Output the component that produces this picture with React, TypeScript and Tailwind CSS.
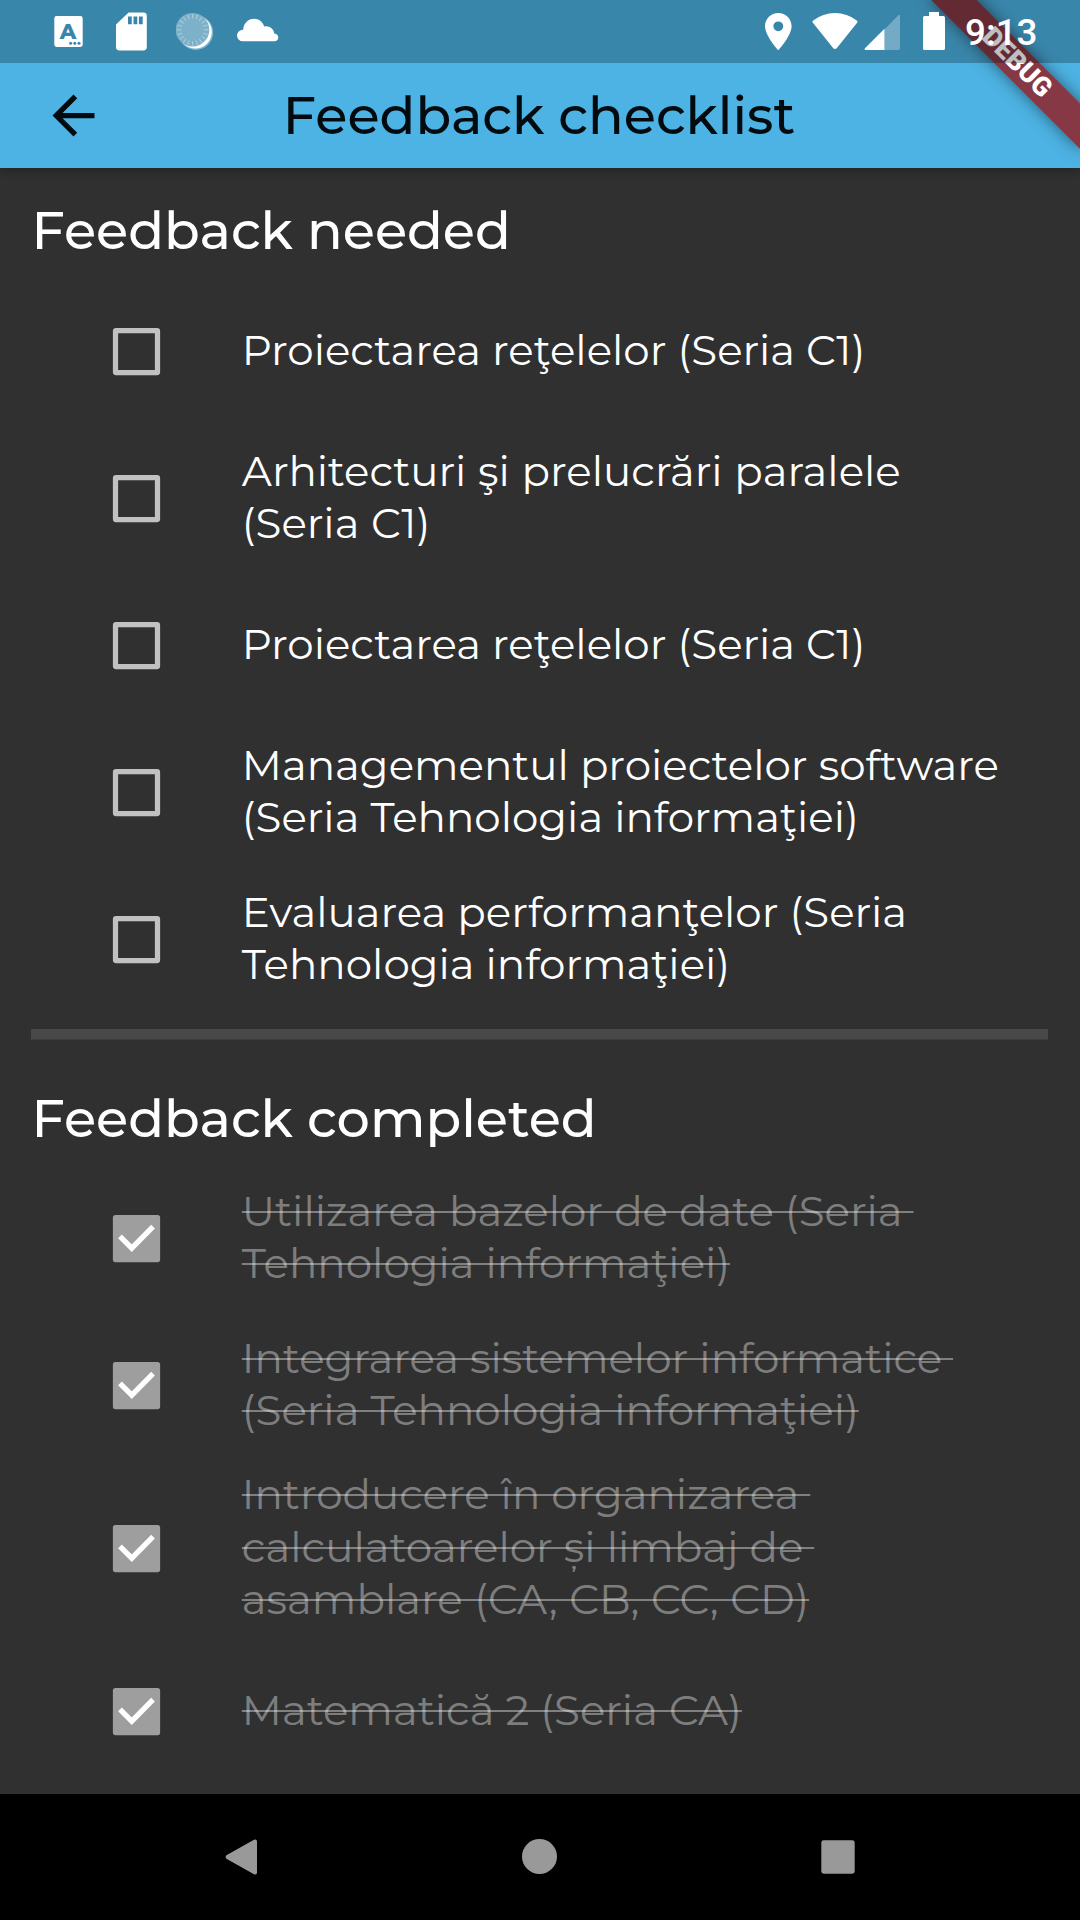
import React from "react";

type Item = { lines: string[]; done?: boolean; spacing?: string };

const needed: Item[] = [
  { lines: ["Proiectarea reţelelor (Seria C1)"] },
  { lines: ["Arhitecturi şi prelucrări paralele", "(Seria C1)"], spacing: "[word-spacing:0.7px]" },
  { lines: ["Proiectarea reţelelor (Seria C1)"] },
  { lines: ["Managementul proiectelor software", "(Seria Tehnologia informaţiei)"] },
  { lines: ["Evaluarea performanţelor (Seria", "Tehnologia informaţiei)"] },
];

const completed: Item[] = [
  { lines: ["Utilizarea bazelor de date (Seria ", "Tehnologia informaţiei)"], done: true },
  { lines: ["Integrarea sistemelor informatice ", "(Seria Tehnologia informaţiei)"], done: true },
  {
    lines: ["Introducere în organizarea ", "calculatoarelor și limbaj de ", "asamblare (CA, CB, CC, CD)"],
    done: true,
    spacing: "last:[word-spacing:0.6px]",
  },
  { lines: ["Matematică 2 (Seria CA)"], done: true },
];

const spokes = Array.from({ length: 20 }, (_, i) => i * 18);

function Checkbox({ checked }: { checked?: boolean }) {
  return (
    <svg className="size-[63px] shrink-0" viewBox="0 0 24 24" role="checkbox" aria-checked={!!checked}>
      {checked ? (
        <>
          <rect x="3" y="3" width="18" height="18" rx="1" fill="#9e9e9e" />
          <path d="M5.7 11.2 L10.2 15.7 L18.3 7.5" fill="none" stroke="#fff" strokeWidth="2" />
        </>
      ) : (
        <rect x="4" y="4" width="16" height="16" rx="0.2" fill="none" stroke="#c1c1c1" strokeWidth="2" strokeLinejoin="round" />
      )}
    </svg>
  );
}

function Row({ item }: { item: Item }) {
  const tall = item.lines.length > 2;
  return (
    <div className={`flex items-center pl-[73.5px] ${tall ? "h-[178.5px]" : "h-[147px]"}`}>
      <Checkbox checked={item.done} />
      <div className={`ml-[73.8px] ${tall ? "pb-[3px] leading-[52.5px]" : "pb-[3px] leading-[52px]"} ${item.done ? "text-white/39" : "text-white"}`}>
        {item.lines.map((line) => (
          <div key={line} className={`text-[42px] leading-[inherit] whitespace-pre ${item.spacing ?? ""}`}>
            <span className={item.done ? "line-through decoration-[2.2px]" : ""}>{line}</span>
          </div>
        ))}
      </div>
    </div>
  );
}

function StatusBar() {
  return (
    <div className="relative z-20 flex h-[63px] items-start bg-black/25 pl-[54px]">
      <svg className="mt-4 h-[31px] w-[29px]" viewBox="0 0 29 31">
        <rect x="0.3" y="0" width="28.4" height="31" rx="2.4" fill="#fff" />
        <text x="14.1" y="22.6" textAnchor="middle" fontFamily="Montserrat, Inter, sans-serif" fontWeight="800" fontSize="21" fill="#3a86ab">
          A
        </text>
        <circle cx="16.6" cy="27.2" r="1.5" fill="#3a86ab" />
        <circle cx="20.8" cy="27.2" r="1.5" fill="#3a86ab" />
        <circle cx="25" cy="27.2" r="1.5" fill="#3a86ab" />
      </svg>
      <svg className="mt-3 ml-[33px] h-[39px] w-[31px]" viewBox="0 0 31 39">
        <path
          fillRule="evenodd"
          fill="#fff"
          d="M12.6.4H27.4a3.4 3.4 0 0 1 3.4 3.4V35a3.4 3.4 0 0 1-3.4 3.4H3.4A3.4 3.4 0 0 1 0 35V12.6Zm-.6 4v7.8h3.8V4.4Zm5.5 0v7.8h3.8V4.4Zm5.4 0v7.8h3.8V4.4Z"
        />
      </svg>
      <svg className="mt-3 ml-[29px] h-[39px] w-[38px]" viewBox="0 0 38 39">
        <circle cx="19.8" cy="20.5" r="17.4" fill="#fff" fillOpacity="0.4" />
        <circle cx="19.3" cy="20" r="16.5" fill="#fff" />
        <circle cx="16.5" cy="17.7" r="16.8" fill="#7db1c9" />
        {spokes.map((a) => (
          <path key={a} d="M16.6 2V6.6" stroke="#a9cbdb" strokeWidth="1.1" transform={`rotate(${a} 16.6 17.8)`} />
        ))}
      </svg>
      <svg className="mt-[18px] ml-[23px] h-[24px] w-[42px]" viewBox="0 0 42 24">
        <path
          fill="#fff"
          d="M5.9 23.3A5.8 5.8 0 0 1 0 17.6C0 14.4 2.6 12 6.2 11.7C6.4 5.4 11.2.7 17 .7C21.8.7 25.8 3.8 27.2 8.4C31.8 7.2 36.7 10.4 37.3 15.5C39.8 15.8 41.3 17.5 41.3 19.6C41.3 21.8 39.6 23.3 37.3 23.3Z"
        />
      </svg>

      <div className="ml-auto flex h-full w-[315px] items-start">
        <svg className="mt-[12.7px] h-[37.4px] w-[26.6px]" viewBox="5 2 14 20" preserveAspectRatio="none">
          <path
            fill="#fff"
            d="M12 2C8.13 2 5 5.13 5 9c0 5.25 7 13 7 13s7-7.75 7-13c0-3.87-3.13-7-7-7zm0 9.7a2.6 2.6 0 1 1 0-5.2 2.6 2.6 0 0 1 0 5.2z"
          />
        </svg>
        <svg className="mt-[13px] ml-[20.5px] h-[37px] w-[46px]" viewBox="0 0 46 37">
          <path
            fill="#fff"
            d="M.9 9.8Q-.1 8.5 1.3 7.5Q10.8 0 23 0T44.7 7.5Q46.1 8.5 45.1 9.8L24.7 35.2Q23 36.8 21.3 35.2Z"
          />
        </svg>
        <svg className="mt-[14px] ml-[6px] h-[36px] w-[36px]" viewBox="0 0 36 36">
          <path fill="#fff" fillOpacity="0.3" d="M20.5 36V15.5L34.3 1.2Q36 0 36 2.2V34.3Q36 36 34.3 36Z" />
          <path fill="#fff" d="M20.5 36H2Q-.3 36 1 34.3L20.5 14.8Z" />
        </svg>
        <svg className="mt-3 ml-[23px] h-[38px] w-[22px]" viewBox="0 0 22 38">
          <path fill="#fff" d="M6 0H16V4H20.4Q22 4 22 5.6V36.4Q22 38 20.4 38H1.6Q0 38 0 36.4V5.6Q0 4 1.6 4H6Z" />
        </svg>
        <span className="mt-[11px] ml-[20px] font-['Roboto',sans-serif] text-[36.75px] leading-[43px] font-medium text-white">9:13</span>
      </div>
    </div>
  );
}

export default function App() {
  return (
    <div className="flex h-[1920px] w-[1080px] flex-col overflow-hidden bg-[#303030] font-['Montserrat','Inter',sans-serif]">
      <header className="relative z-10 h-[168px] shrink-0 bg-[#4db3e4] shadow-[0_3px_8px_rgba(0,0,0,0.25)]">
        <StatusBar />
        <div className="flex h-[105px] items-center pl-[42px] text-[#030b0f]">
          <svg className="size-[63px]" viewBox="0 0 24 24" fill="currentColor">
            <path d="M20 11H7.83l5.59-5.59L12 4l-8 8 8 8 1.41-1.41L7.83 13H20v-2z" />
          </svg>
          <h1 className="w-[868px] pb-[2px] text-center text-[52.5px] leading-[64px] font-medium">Feedback checklist</h1>
        </div>
        <div className="absolute inset-0 z-10 overflow-hidden">
          <div className="absolute top-[47.4px] left-[911.9px] flex h-[31.5px] w-[210px] rotate-45 items-center justify-center bg-[#863944] font-['Roboto',sans-serif] text-[26.8px] leading-[31.5px] font-black text-white shadow-[0_0_16px_rgba(0,0,0,0.5)]">
            DEBUG
          </div>
        </div>
      </header>

      <main className="flex flex-1 flex-col">
        <h2 className="mt-[30px] ml-[31.5px] h-[64px] text-[52.5px] leading-[64px] font-medium text-white">Feedback needed</h2>
        <div className="mt-4 flex flex-col pl-[31.5px]">
          {needed.map((item, i) => (
            <Row key={i} item={item} />
          ))}
        </div>
        <div className="mt-4 mr-8 ml-[31px] h-[11px] shrink-0 border-b border-[#3d3d3d] bg-[#494949]" />
        <h2 className="mt-[46px] ml-[31.5px] h-[64px] text-[52.5px] leading-[64px] font-medium text-white">Feedback completed</h2>
        <div className="mt-[15px] flex flex-col pl-[31.5px]">
          {completed.map((item, i) => (
            <Row key={i} item={item} />
          ))}
        </div>
      </main>

      <nav className="flex h-[126px] shrink-0 items-center bg-black pb-px pl-[225px]">
        <svg className="h-[36px] w-[32px]" viewBox="0 0 32 36">
          <path fill="#999" d="M1.4 16.3L29 .7Q32 -.3 32 2.5V33.5Q32 36.3 29 35.3L1.4 19.7Q-.2 18 1.4 16.3Z" />
        </svg>
        <div className="ml-[265px] size-[35px] rounded-full bg-[#999]" />
        <svg className="ml-[264px] size-[34px]" viewBox="0 0 34 34">
          <rect x="0.3" y="0.3" width="33.4" height="33.4" rx="2.4" fill="#999" />
        </svg>
      </nav>
    </div>
  );
}
